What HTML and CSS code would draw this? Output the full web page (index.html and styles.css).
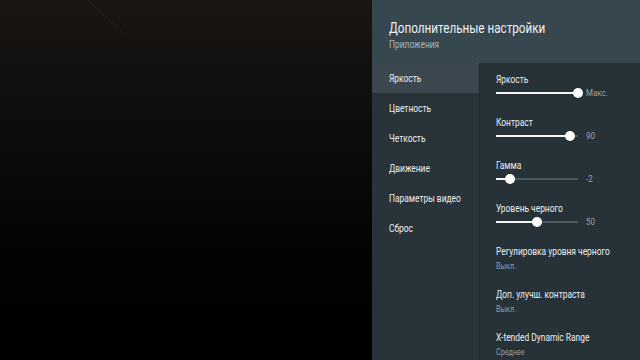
FILE: index.html
```html
<!doctype html>
<html lang="ru">
<head>
    <meta charset="UTF-8">
    <title>Дополнительные настройки</title>
    <link rel="stylesheet" href="styles.css">
</head>
<body>
<div class="screen">
    <div class="backdrop"><div class="glare"></div></div>
    <div class="panel">
        <div class="head">
            <div class="title">Дополнительные настройки</div>
            <div class="subtitle">Приложения</div>
        </div>
        <div class="body">
            <ul class="menu">
                <li class="active"><span>Яркость</span></li>
                <li><span>Цветность</span></li>
                <li><span>Четкость</span></li>
                <li><span>Движение</span></li>
                <li><span>Параметры видео</span></li>
                <li><span>Сброс</span></li>
            </ul>
            <div class="content">
                <div class="opt">
                    <div class="label">Яркость</div>
                    <div class="slider">
                        <div class="track"><div class="fill" style="width: 100%"></div><span class="knob" style="left: 100%"></span></div>
                        <span class="val">Макс.</span>
                    </div>
                </div>
                <div class="opt">
                    <div class="label">Контраст</div>
                    <div class="slider">
                        <div class="track"><div class="fill" style="width: 90%"></div><span class="knob" style="left: 90%"></span></div>
                        <span class="val">90</span>
                    </div>
                </div>
                <div class="opt">
                    <div class="label">Гамма</div>
                    <div class="slider">
                        <div class="track"><div class="fill" style="width: 17%"></div><span class="knob" style="left: 17%"></span></div>
                        <span class="val">-2</span>
                    </div>
                </div>
                <div class="opt">
                    <div class="label">Уровень черного</div>
                    <div class="slider">
                        <div class="track"><div class="fill" style="width: 50%"></div><span class="knob" style="left: 50%"></span></div>
                        <span class="val">50</span>
                    </div>
                </div>
                <div class="opt text">
                    <div class="label">Регулировка уровня черного</div>
                    <div class="sub">Выкл.</div>
                </div>
                <div class="opt text">
                    <div class="label">Доп. улучш. контраста</div>
                    <div class="sub">Выкл.</div>
                </div>
                <div class="opt text">
                    <div class="label">X-tended Dynamic Range</div>
                    <div class="sub">Среднее</div>
                </div>
            </div>
        </div>
    </div>
</div>
</body>
</html>
```

FILE: styles.css
```css
* {
    margin: 0;
    padding: 0;
}

ul {
    list-style: none;
}

body {
    width: 640px;
    height: 360px;
    overflow: hidden;
    background: #000;
    font-family: Roboto, "Noto Sans", sans-serif;
}

.screen {
    display: flex;
    height: 360px;
}

.backdrop {
    width: 372px;
    position: relative;
    overflow: hidden;
    background: linear-gradient(180deg, #191613 0%, #0d0c0b 40%, #030303 70%, #000 100%);
}

.backdrop .glare {
    position: absolute;
    top: 0;
    left: 88px;
    width: 36px;
    height: 34px;
    background: linear-gradient(to top right, transparent 47%, rgba(255, 255, 255, 0.035) 50%, transparent 53%);
}

.panel {
    width: 268px;
    display: flex;
    flex-direction: column;
    background: #263238;
}

/* the tv font is a condensed roboto, squeeze the plain one to match */
.title,
.subtitle,
.menu span,
.label,
.sub,
.val {
    display: inline-block;
    white-space: nowrap;
    transform: scaleX(0.8);
    transform-origin: 0 50%;
}

.head {
    height: 63px;
    flex-shrink: 0;
    box-sizing: border-box;
    padding: 19px 0 0 17px;
    background: #37474f;
}

.head .title {
    display: block;
    font-size: 14px;
    line-height: 18px;
    color: #eef1f2;
    transform: scaleX(0.835);
}

.head .subtitle {
    display: block;
    font-size: 10.5px;
    line-height: 13px;
    margin-top: 1px;
    color: #a7b3b8;
}

.body {
    flex: 1;
    display: flex;
}

.menu {
    width: 107px;
    border-right: 1px solid #1f292e;
    background: #29343a;
}

.menu li {
    height: 30px;
    line-height: 32px;
    padding-left: 17px;
    font-size: 10.5px;
    color: #eceff0;
}

.menu li.active {
    background: #3b484f;
}

.content {
    flex: 1;
    padding-left: 16px;
    background: #263238;
}

.opt {
    height: 43px;
    box-sizing: border-box;
    padding-top: 10px;
}

.opt.text {
    padding-top: 10px;
}

.label {
    display: block;
    font-size: 10.5px;
    line-height: 14px;
    color: #eceff0;
}

.sub {
    display: block;
    font-size: 9px;
    line-height: 14px;
    color: #94a0a5;
}

.slider {
    height: 12px;
    display: flex;
    align-items: center;
}

.track {
    width: 82px;
    height: 2px;
    position: relative;
    background: #4c5a60;
}

.fill {
    height: 2px;
    background: #f4f4f4;
}

.knob {
    position: absolute;
    top: -4px;
    width: 10px;
    height: 10px;
    margin-left: -5px;
    border-radius: 50%;
    background: #fff;
}

.val {
    margin-left: 8px;
    font-size: 9px;
    color: #9aa5aa;
    transform: scaleX(0.88);
}
```
